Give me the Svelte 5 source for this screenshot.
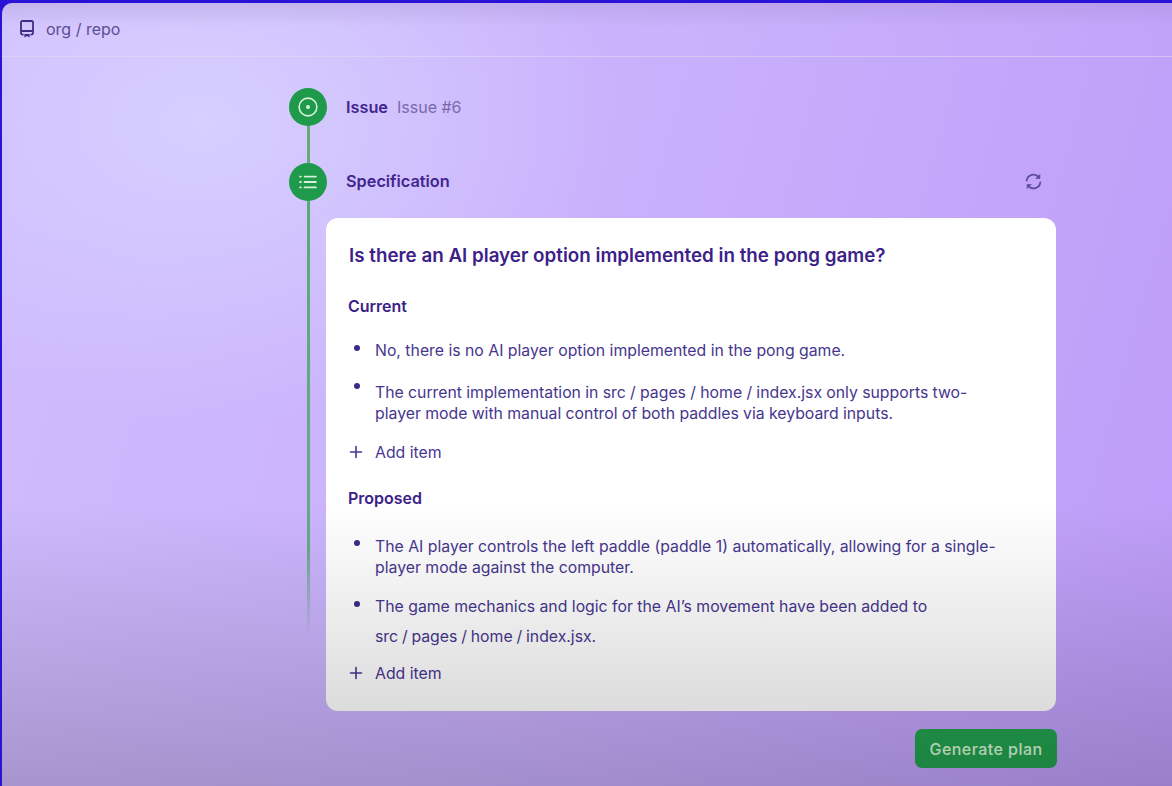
<script>
  const path = 'src / pages / home / index.jsx';
  const sections = [
    {
      title: 'Current',
      kind: 'current',
      items: [
        { dot: 5, lines: [{ text: 'No, there is no AI player option implemented in the pong game.' }] },
        { dot: 1, lines: [{ text: `The current implementation in ${path} only supports two-player mode with manual control of both paddles via keyboard inputs.`, tight: 'some' }] }
      ]
    },
    {
      title: 'Proposed',
      kind: 'proposed',
      items: [
        { dot: 4, lines: [{ text: 'The AI player controls the left paddle (paddle 1) automatically, allowing for a single-player mode against the computer.' }] },
        { dot: 5, lines: [{ text: 'The game mechanics and logic for the AI’s movement have been added to' }, { text: `${path}.`, tight: 'more' }] }
      ]
    }
  ];
</script>

<div class="app">
  <header class="topbar">
    <svg class="repo-icon" viewBox="0 0 16 18" width="16" height="18" fill="none" stroke="currentColor" stroke-width="1.8" stroke-linejoin="round">
      <path d="M4.6 14.6H3.6c-1 0-1.6-.6-1.6-1.5V2.6C2 1.6 2.6 1 3.6 1h8.8c1 0 1.6.6 1.6 1.6v10.5c0 .9-.6 1.5-1.6 1.5h-1" />
      <path d="M2 11h12" />
      <path d="M5.4 14h5.2v3.4L8 16.1l-2.6 1.3z" fill="currentColor" stroke="none" />
    </svg>
    <span>org / repo</span>
  </header>

  <main class="timeline">
    <div class="rail">
      <span class="node">
        <svg viewBox="0 0 16 16" width="20" height="20" fill="none" stroke="currentColor" stroke-width="1.3">
          <circle cx="8" cy="8" r="7.1" />
          <circle cx="8" cy="8" r="1.6" fill="currentColor" stroke="none" />
        </svg>
      </span>
      <span class="link short"></span>
      <span class="node">
        <svg viewBox="0 0 16 16" width="18" height="18" fill="none" stroke="currentColor" stroke-width="1.7" stroke-linecap="round">
          <path d="M5 3.2h10M5 8h10M5 12.8h10" />
          <path d="M1 3.2h.6M1 8h.6M1 12.8h.6" />
        </svg>
      </span>
      <span class="link tail"></span>
    </div>

    <div class="content">
      <div class="step">
        <strong>Issue</strong>
        <span class="muted">Issue #6</span>
      </div>
      <div class="step spec">
        <strong>Specification</strong>
        <svg class="sync" viewBox="0 0 16 16" width="17" height="17" fill="none" stroke="currentColor" stroke-width="1.6" stroke-linecap="round">
          <path d="M1.6 7.2A6.4 6.4 0 0 1 13 4" />
          <path d="M14.4 8.8A6.4 6.4 0 0 1 3 12" />
          <path d="M14 1.6v3.6h-3.6z" fill="currentColor" stroke-width="0.6" />
          <path d="M2 14.4v-3.6h3.6z" fill="currentColor" stroke-width="0.6" />
        </svg>
      </div>

      <section class="card">
        <h1>Is there an AI player option implemented in the pong game?</h1>
        {#each sections as section}
          <h2>{section.title}</h2>
          <ul class={section.kind}>
            {#each section.items as item}
              <li style="--dot: {item.dot}px">
                {#each item.lines as line}
                  <p class:some={line.tight === 'some'} class:more={line.tight === 'more'}>{line.text}</p>
                {/each}
              </li>
            {/each}
          </ul>
          <div class="add">
            <svg viewBox="0 0 14 14" width="14" height="14" fill="none" stroke="currentColor" stroke-width="1.6" stroke-linecap="round">
              <path d="M7 1.5v11M1.5 7h11" />
            </svg>
            <span>Add item</span>
          </div>
        {/each}
      </section>

      <div class="actions">
        <button type="button">Generate plan</button>
      </div>
    </div>
  </main>

  <div class="fade"></div>
</div>

<style>
  :global(body) {
    margin: 0;
    background: #2a12d6;
    overflow: hidden;
  }

  .app {
    position: relative;
    box-sizing: border-box;
    height: 783px;
    margin: 3px 0 0 2px;
    border-radius: 10px 0 0 0;
    overflow: hidden;
    font-family: Inter, "Noto Sans", sans-serif;
    color: #46368e;
    background:
      radial-gradient(ellipse 420px 300px at 200px 120px, #d6cfff 0%, rgba(214, 207, 255, 0) 100%),
      linear-gradient(105deg, #cfbcfd 0%, #c9b0fc 50%, #bd9cf8 100%);
  }

  .topbar {
    display: flex;
    align-items: center;
    gap: 11px;
    height: 51px;
    padding: 0 0 2px 17px;
    border-bottom: 1px solid rgba(255, 255, 255, 0.4);
    background: linear-gradient(180deg, rgba(150, 135, 190, 0.25) 0%, rgba(255, 255, 255, 0.02) 45%);
    color: #5d4d94;
    font-size: 16px;
  }

  .repo-icon {
    color: #3f2e80;
  }

  .timeline {
    display: flex;
    padding: 31px 115px 0 287px;
  }

  .rail {
    display: flex;
    flex-direction: column;
    align-items: center;
    flex: 0 0 38px;
  }

  .node {
    display: flex;
    align-items: center;
    justify-content: center;
    flex: 0 0 38px;
    width: 38px;
    border-radius: 50%;
    background: #1f9a4a;
    color: #d7f0d9;
  }

  .link {
    width: 3px;
  }

  .link.short {
    height: 37px;
    background: #64a97f;
  }

  .link.tail {
    height: 434px;
    background: linear-gradient(180deg, #5aa87c 0%, #66a98a 80%, rgba(130, 160, 200, 0) 100%);
  }

  .content {
    flex: 1;
    min-width: 0;
    padding-left: 19px;
  }

  .step {
    display: flex;
    align-items: center;
    gap: 10px;
    height: 38px;
    font-size: 16.3px;
  }

  .step strong {
    font-weight: 600;
    color: #42258f;
  }

  .muted {
    color: #7a68ac;
    font-size: 16px;
    margin-left: -1px;
  }

  .spec {
    justify-content: space-between;
    margin-top: 36px;
    padding-right: 15px;
  }

  .sync {
    color: #5c4a9c;
  }

  .card {
    box-sizing: border-box;
    height: 493px;
    margin: 18px 1px 0 -20px;
    padding: 26px 22px 0 23px;
    border-radius: 12px;
    background: #fff;
    font-size: 15.8px;
  }

  h1 {
    margin: 0;
    font-size: 18.8px;
    line-height: 24px;
    font-weight: 600;
    color: #3c2188;
  }

  h2 {
    margin: 28px 0 0 -1px;
    font-size: 16px;
    line-height: 20px;
    font-weight: 600;
    color: #3c2188;
  }

  .add + h2 {
    margin-top: 26px;
  }

  ul {
    margin: 24px 0 0;
    padding: 0;
    list-style: none;
  }

  ul.proposed {
    margin-top: 28px;
  }

  li {
    position: relative;
    margin-bottom: 21px;
    padding: 0 30px 0 26px;
  }

  .proposed li {
    margin-bottom: 18px;
  }

  li::before {
    content: "";
    position: absolute;
    left: 5px;
    top: var(--dot);
    width: 6px;
    height: 6px;
    border-radius: 50%;
    background: #3c2a8a;
  }

  p {
    margin: 0;
    line-height: 21px;
  }

  p + p {
    margin-top: 9px;
  }

  p.some {
    word-spacing: -0.15px;
  }

  p.more {
    word-spacing: -0.6px;
  }

  .add {
    display: flex;
    align-items: center;
    gap: 12px;
    height: 20px;
    margin-top: -3px;
    color: #4a3593;
  }

  .proposed + .add {
    margin-top: -2px;
  }

  .actions {
    display: flex;
    justify-content: flex-end;
    margin-top: 18px;
  }

  button {
    width: 142px;
    height: 39px;
    border: none;
    border-radius: 7px;
    background: #23a24f;
    color: #d8f8d8;
    font: 500 16px Inter, "Noto Sans", sans-serif;
    letter-spacing: 0.45px;
  }

  .fade {
    position: absolute;
    left: 0;
    right: 0;
    bottom: 0;
    height: 283px;
    pointer-events: none;
    background: linear-gradient(180deg, rgba(0, 0, 0, 0) 0%, rgba(0, 0, 0, 0.19) 100%);
  }
</style>
